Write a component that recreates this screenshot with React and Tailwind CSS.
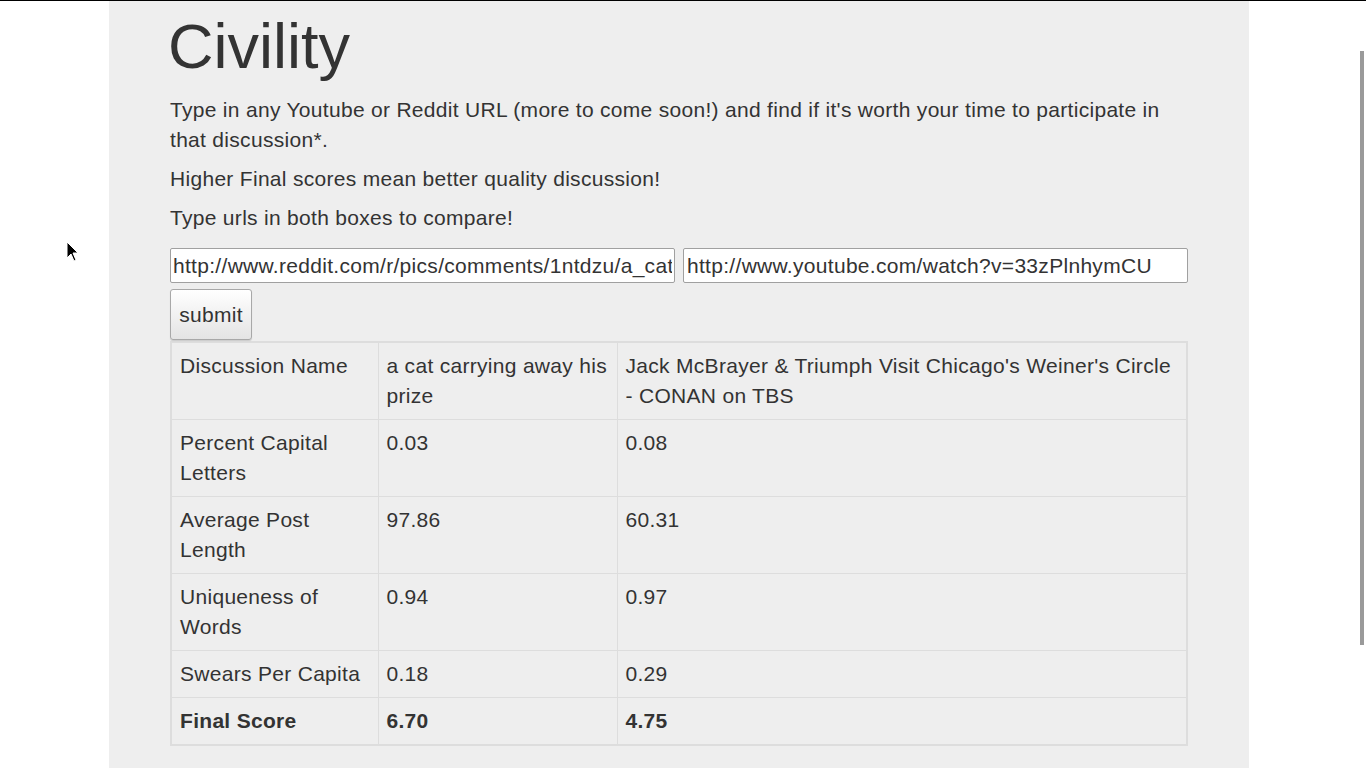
export default function App() {
  const filas = [
    ['Percent Capital Letters', '0.03', '0.08'],
    ['Average Post Length', '97.86', '60.31'],
    ['Uniqueness of Words', '0.94', '0.97'],
    ['Swears Per Capita', '0.18', '0.29'],
  ];

  const celula = 'border border-[#dddddd] px-[8px] py-[8px] align-top';

  return (
    <div className="relative h-[768px] overflow-hidden bg-white text-[#333] tracking-[0.3px] font-['Liberation_Sans',Arial,sans-serif]">
      {/* linha preta no topo */}
      <div className="h-px bg-black" />

      <div className="w-[1358px] flex justify-center">
        <div className="w-[1140px] h-[767px] bg-[#eeeeee] px-[61px]">
          <h1 className="text-[63px] leading-[69px] tracking-normal mt-[11px] mb-[14px] ml-[-2px] font-normal">Civility</h1>
          <p className="text-[21px] leading-[30px] mb-[9px]">
            Type in any Youtube or Reddit URL (more to come soon!) and find if it's worth your time to participate in that discussion*.
          </p>
          <p className="text-[21px] leading-[30px] mb-[9px]">Higher Final scores mean better quality discussion!</p>
          <p className="text-[21px] leading-[30px] mb-[15px]">Type urls in both boxes to compare!</p>

          <div className="flex gap-[8px] w-[1018px]">
            <input
              readOnly
              defaultValue="http://www.reddit.com/r/pics/comments/1ntdzu/a_cat_carrying_away_his_prize/"
              className="w-[505px] h-[35px] bg-white border border-[#a0a0a0] rounded-[2px] px-[2px] text-[21px] tracking-[0.3px] text-[#333] outline-none"
            />
            <input
              readOnly
              defaultValue="http://www.youtube.com/watch?v=33zPlnhymCU"
              className="w-[505px] h-[35px] bg-white border border-[#a0a0a0] rounded-[2px] px-[3px] text-[21px] tracking-[0.3px] text-[#333] outline-none"
            />
          </div>

          <button className="mt-[6px] h-[51px] w-[82px] border border-[#a8a8a8] rounded-[3px] bg-gradient-to-b from-white to-[#e4e4e4] text-[21px] tracking-[0.3px] text-[#333] shadow-[0_1px_1px_rgba(0,0,0,0.15)]">
            submit
          </button>

          <table className="w-[1018px] border-collapse border-2 border-[#dddddd] text-[21px] leading-[30px] mt-px">
            <tbody>
              <tr>
                <td className={`w-[207px] ${celula}`}>Discussion Name</td>
                <td className={`w-[239px] ${celula}`}>a cat carrying away his prize</td>
                <td className={celula}>Jack McBrayer &amp; Triumph Visit Chicago's Weiner's Circle - CONAN on TBS</td>
              </tr>
              {filas.map(f => (
                <tr key={f[0]}>
                  <td className={celula}>{f[0]}</td>
                  <td className={celula}>{f[1]}</td>
                  <td className={celula}>{f[2]}</td>
                </tr>
              ))}
              <tr className="font-bold">
                <td className={celula}>Final Score</td>
                <td className={celula}>6.70</td>
                <td className={celula}>4.75</td>
              </tr>
            </tbody>
          </table>
        </div>
      </div>

      {/* barra de rolagem */}
      <div className="absolute right-[2px] top-[51px] w-[4px] h-[594px] bg-[#9a9a9a]" />

      {/* cursor do mouse */}
      <svg className="absolute left-[66px] top-[241px]" width="14" height="22" viewBox="0 0 14 22">
        <path d="M1 1 L1 17 L5 13 L8 20 L10 19 L7 12 L12 12 Z" fill="black" stroke="white" strokeWidth="1" />
      </svg>
    </div>
  );
}
